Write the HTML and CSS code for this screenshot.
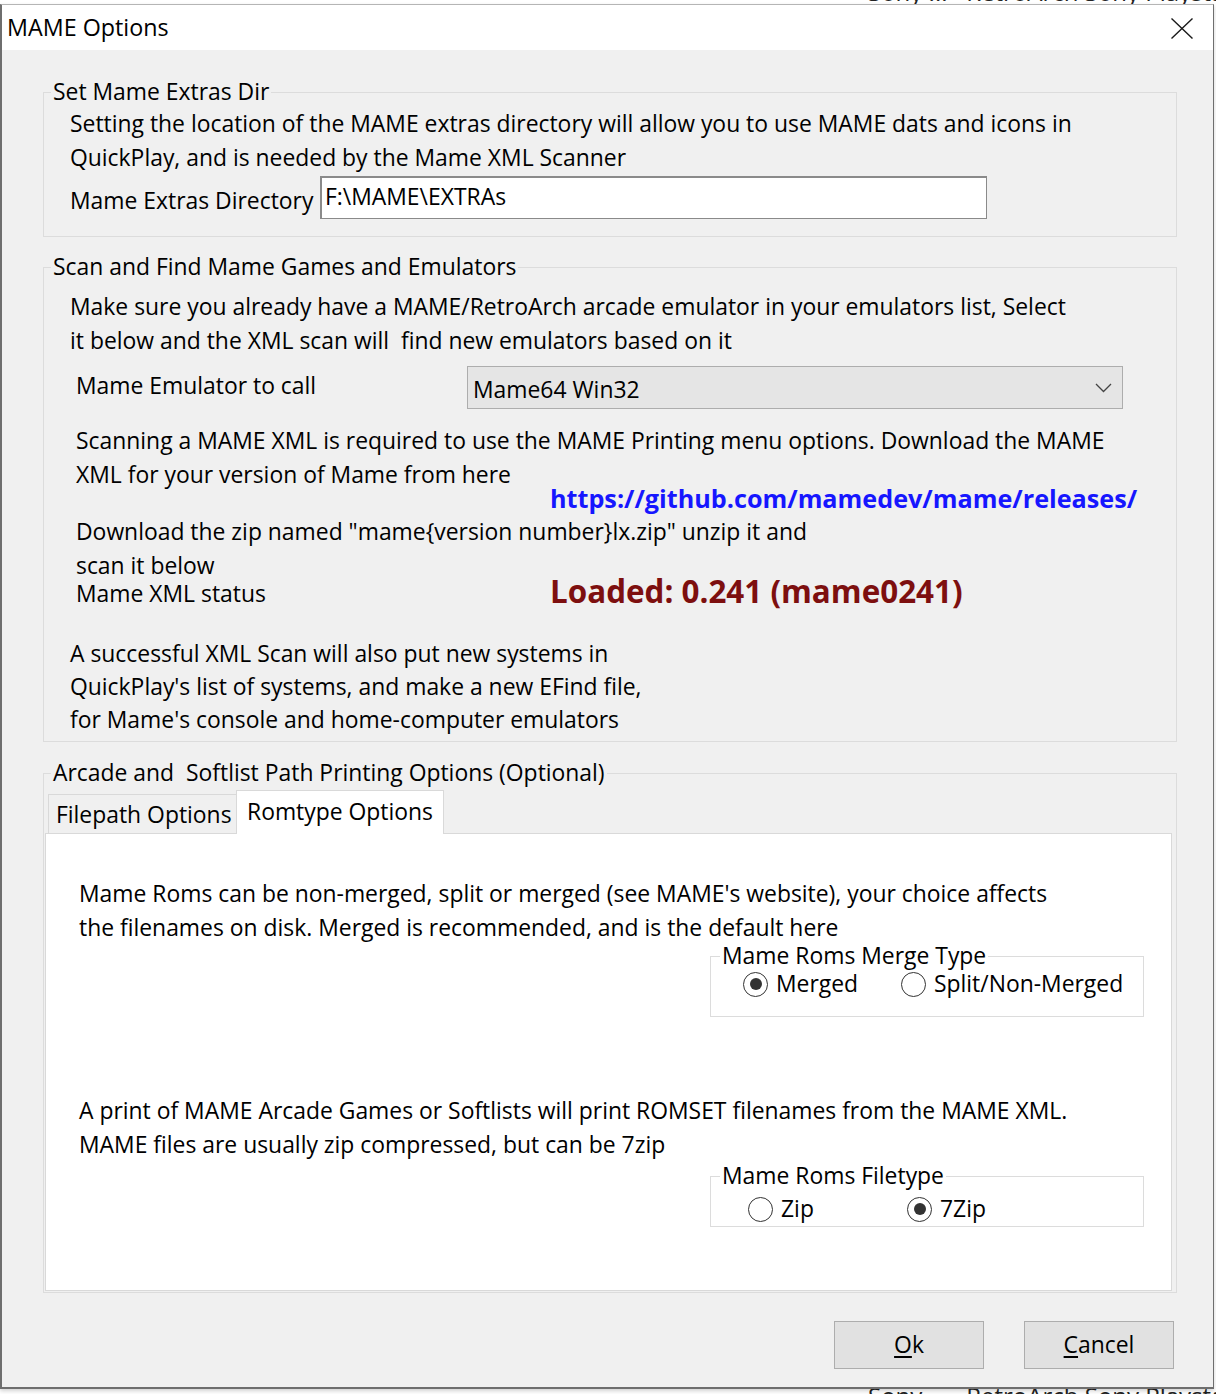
FILE: index.html
```html
<!DOCTYPE html>
<html>
<head>
<meta charset="utf-8">
<title>MAME Options</title>
<link rel="stylesheet" href="styles.css">
</head>
<body>
<div class="desk">
  <span class="bg-text bg-top">Sony ...   RetroArch Sony Playstation</span>
  <span class="bg-text bg-bottom">Sony ...   RetroArch Sony Playstation</span>
  <div class="window">
    <div class="titlebar">
      <span class="title">MAME Options</span>
      <svg class="close" width="22" height="21" viewBox="0 0 22 21"><path d="M0.5 0.5 L21.5 20.5 M21.5 0.5 L0.5 20.5" stroke="#1a1a1a" stroke-width="1.4" fill="none"/></svg>
    </div>
    <div class="client">
      <fieldset class="group g1">
        <legend>Set Mame Extras Dir</legend>
        <p class="desc">Setting the location of the MAME extras directory will allow you to use MAME dats and icons in<br>QuickPlay, and is needed by the Mame XML Scanner</p>
        <div class="dir-row">
          <span class="dir-label">Mame Extras Directory</span>
          <div class="textbox">F:\MAME\EXTRAs</div>
        </div>
      </fieldset>

      <fieldset class="group g2">
        <legend>Scan and Find Mame Games and Emulators</legend>
        <p class="desc">Make sure you already have a MAME/RetroArch arcade emulator in your emulators list, Select<br>it below and the XML scan will&nbsp; find new emulators based on it</p>
        <div class="emu-row">
          <span class="emu-label">Mame Emulator to call</span>
          <div class="combo">
            <span>Mame64 Win32</span>
            <svg class="chev" width="17" height="10" viewBox="0 0 17 10"><path d="M1 1 L8.5 8.5 L16 1" stroke="#444" stroke-width="1.3" fill="none"/></svg>
          </div>
        </div>
        <p class="scan">Scanning a MAME XML is required to use the MAME Printing menu options. Download the MAME<br>XML for your version of Mame from here</p>
        <div class="link">https://github.com/mamedev/mame/releases/</div>
        <p class="dl">Download the zip named "mame{version number}lx.zip" unzip it and<br>scan it below</p>
        <div class="status-row">
          <span class="status-label">Mame XML status</span>
          <span class="loaded">Loaded: 0.241 (mame0241)</span>
        </div>
        <p class="success">A successful XML Scan will also put new systems in<br>QuickPlay's list of systems, and make a new EFind file,<br>for Mame's console and home-computer emulators</p>
      </fieldset>

      <fieldset class="group g3">
        <legend>Arcade and&nbsp; Softlist Path Printing Options (Optional)</legend>
        <div class="tabs">
          <div class="tab">Filepath Options</div>
          <div class="tab active">Romtype Options</div>
        </div>
        <div class="panel">
          <p class="ptext">Mame Roms can be non-merged, split or merged (see MAME's website), your choice affects<br>the filenames on disk. Merged is recommended, and is the default here</p>
          <fieldset class="subgroup merge">
            <legend>Mame Roms Merge Type</legend>
            <div class="radio-row">
              <span class="radio"><span class="dot checked"></span>Merged</span>
              <span class="radio"><span class="dot"></span>Split/Non-Merged</span>
            </div>
          </fieldset>
          <p class="ptext p2">A print of MAME Arcade Games or Softlists will print ROMSET filenames from the MAME XML.<br>MAME files are usually zip compressed, but can be 7zip</p>
          <fieldset class="subgroup filetype">
            <legend>Mame Roms Filetype</legend>
            <div class="radio-row">
              <span class="radio"><span class="dot"></span>Zip</span>
              <span class="radio"><span class="dot checked"></span>7Zip</span>
            </div>
          </fieldset>
        </div>
      </fieldset>

      <div class="footer">
        <button class="btn"><u>O</u>k</button>
        <button class="btn"><u>C</u>ancel</button>
      </div>
    </div>
  </div>
</div>
</body>
</html>
```

FILE: styles.css
```css
* { box-sizing: border-box; }
html, body { margin: 0; padding: 0; }
body {
  width: 1216px;
  height: 1394px;
  overflow: hidden;
  background: #ffffff;
  font-family: "Open Sans", "Noto Sans", sans-serif;
  font-size: 22.9px;
  color: #000;
}
.desk {
  position: relative;
  width: 1216px;
  height: 1394px;
  overflow: hidden;
  padding-top: 4px;
}
.bg-text {
  position: absolute;
  left: 868px;
  font-size: 24px;
  line-height: 30px;
  color: #222;
  white-space: pre;
}
.bg-top { top: -23px; }
.bg-bottom { top: 1381px; }

.window {
  position: relative;
  width: 1214px;
  height: 1385px;
  background: #f0f0f0;
  border: 1px solid #6e6e6e;
  border-top-color: #b5b5b5;
  border-left-width: 2px;
  border-bottom-width: 2px;
  box-shadow: 0 2px 4px rgba(0, 0, 0, 0.18);
}
.titlebar {
  height: 45px;
  background: #fff;
  display: flex;
  align-items: center;
  justify-content: space-between;
  padding: 0 20px 0 5px;
}
.title { font-size: 23.3px; line-height: 30px; margin-top: -1px; }
.close { display: block; margin-top: 1px; }

.client { padding: 27px 36px 0 41px; }

.group {
  margin: 0;
  padding: 0;
  border: 1px solid #dcdcdc;
  min-width: 0;
}
.group > legend {
  margin-left: 7px;
  padding: 0 2px;
  line-height: 30px;
}
p { margin: 0; }

/* group 1 */
.g1 { padding-bottom: 17px; }
.g1 .desc { margin-left: 26px; line-height: 34px; }
.dir-row {
  display: flex;
  align-items: center;
  margin: 1px 0 0 26px;
  height: 43px;
}
.dir-label { width: 250px; margin-top: 6px; }
.textbox {
  width: 667px;
  height: 43px;
  background: #fff;
  border: 1px solid #8a8a8a;
  border-width: 2px 1px 1px 2px;
  padding-left: 3px;
  line-height: 38px;
}

/* group 2 */
.g2 { margin-top: 15px; padding-bottom: 5px; }
.g2 .desc { margin: 8px 0 0 26px; line-height: 34px; }
.emu-row {
  display: flex;
  align-items: center;
  margin: 8px 0 0 32px;
  height: 43px;
}
.emu-label { width: 391px; margin-top: -5px; }
.combo {
  width: 656px;
  height: 43px;
  background: #e5e5e5;
  border: 1px solid #adadad;
  display: flex;
  align-items: center;
  justify-content: space-between;
  padding: 3px 10px 0 5px;
}
.chev { display: block; margin-top: -3px; }
.scan { margin: 15px 0 0 32px; line-height: 34px; }
.link {
  margin: -6px 0 0 506px;
  font-weight: 700;
  font-size: 25.2px;
  line-height: 24px;
  color: #1616ff;
}
.dl { margin: 5px 0 0 32px; line-height: 34px; }
.status-row {
  display: flex;
  align-items: center;
  margin: -7px 0 0 32px;
  height: 34px;
}
.status-label { width: 474px; }
.loaded {
  font-weight: 700;
  font-size: 31.4px;
  line-height: 34px;
  color: #7d0f0f;
  margin-top: -4px;
}
.success { margin: 27px 0 0 26px; line-height: 33px; }

/* group 3 */
.g3 { margin-top: 16px; }
.tabs {
  display: flex;
  align-items: flex-end;
  height: 46px;
  margin-left: 4px;
  position: relative;
  z-index: 2;
}
.tab {
  width: 188px;
  height: 39px;
  margin-bottom: 1px;
  background: #f0f0f0;
  border: 1px solid #d9d9d9;
  border-right: none;
  border-bottom: none;
  padding-left: 7px;
  line-height: 40px;
  white-space: nowrap;
}
.tab.active {
  width: 208px;
  height: 44px;
  margin-bottom: 0;
  background: #fff;
  border-right: 1px solid #d9d9d9;
  padding-left: 10px;
  line-height: 42px;
}
.panel {
  position: relative;
  z-index: 1;
  margin: -1px 4px 1px 1px;
  background: #fff;
  border: 1px solid #d9d9d9;
  padding: 43px 0 63px 33px;
}
.ptext { line-height: 34px; }
.p2 { margin-top: 77px; }
.subgroup {
  margin: 0 0 0 631px;
  width: 434px;
  padding: 0;
  border: 1px solid #dcdcdc;
  min-width: 0;
}
.subgroup > legend {
  margin-left: 9px;
  padding: 0 2px;
  line-height: 22px;
}
.merge { padding: 4px 0 19px 0; }
.filetype { margin-top: 3px; padding: 9px 0 4px 0; }
.radio-row {
  display: grid;
  grid-template-columns: 158px auto;
  height: 26px;
  align-items: center;
}
.merge .radio-row { padding-left: 32px; }
.filetype .radio-row { padding-left: 37px; grid-template-columns: 159px auto; }
.radio {
  display: flex;
  align-items: center;
  gap: 8px;
  line-height: 26px;
  white-space: nowrap;
}
.dot {
  width: 25px;
  height: 25px;
  border-radius: 50%;
  border: 1.5px solid #333;
  background: #fff;
  display: flex;
  align-items: center;
  justify-content: center;
  flex: none;
}
.dot.checked::after {
  content: "";
  width: 12px;
  height: 12px;
  border-radius: 50%;
  background: #333;
}

/* footer */
.footer {
  display: flex;
  justify-content: flex-end;
  gap: 40px;
  margin-top: 28px;
  padding-right: 3px;
}
.btn {
  width: 150px;
  height: 48px;
  background: #e1e1e1;
  border: 1px solid #adadad;
  font-family: inherit;
  font-size: 22.9px;
  color: #000;
  padding: 0;
  line-height: 46px;
}
.btn u { text-underline-offset: 3px; }
```
